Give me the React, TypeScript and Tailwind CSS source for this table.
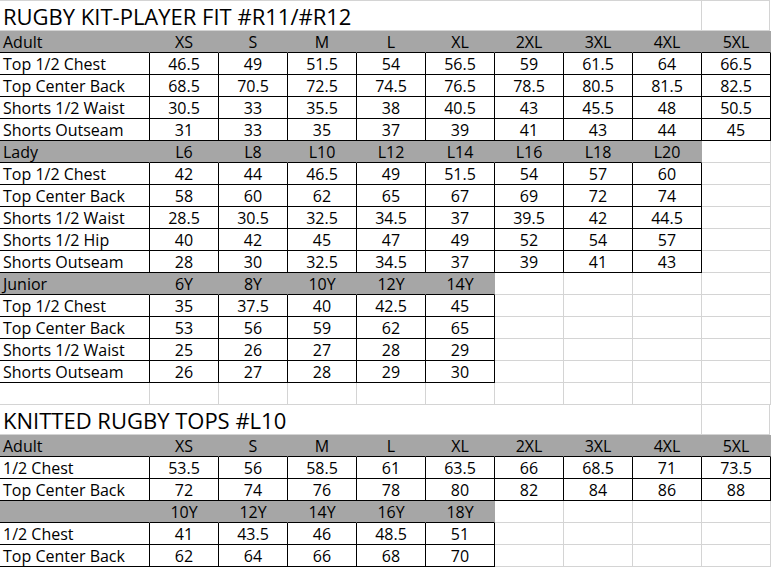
type Row =
  | { type: "title"; text: string }
  | { type: "table"; head: boolean; cells: string[] };

type Kind = "title" | "head" | "data" | "empty";

const COLS = 10;

const head = (...cells: string[]): Row => ({ type: "table", head: true, cells });
const data = (...cells: string[]): Row => ({ type: "table", head: false, cells });

const rows: Row[] = [
  { type: "title", text: "RUGBY KIT-PLAYER FIT #R11/#R12" },
  head("Adult", "XS", "S", "M", "L", "XL", "2XL", "3XL", "4XL", "5XL"),
  data("Top 1/2 Chest", "46.5", "49", "51.5", "54", "56.5", "59", "61.5", "64", "66.5"),
  data("Top Center Back", "68.5", "70.5", "72.5", "74.5", "76.5", "78.5", "80.5", "81.5", "82.5"),
  data("Shorts 1/2 Waist", "30.5", "33", "35.5", "38", "40.5", "43", "45.5", "48", "50.5"),
  data("Shorts Outseam", "31", "33", "35", "37", "39", "41", "43", "44", "45"),
  head("Lady", "L6", "L8", "L10", "L12", "L14", "L16", "L18", "L20"),
  data("Top 1/2 Chest", "42", "44", "46.5", "49", "51.5", "54", "57", "60"),
  data("Top Center Back", "58", "60", "62", "65", "67", "69", "72", "74"),
  data("Shorts 1/2 Waist", "28.5", "30.5", "32.5", "34.5", "37", "39.5", "42", "44.5"),
  data("Shorts 1/2 Hip", "40", "42", "45", "47", "49", "52", "54", "57"),
  data("Shorts Outseam", "28", "30", "32.5", "34.5", "37", "39", "41", "43"),
  head("Junior", "6Y", "8Y", "10Y", "12Y", "14Y"),
  data("Top 1/2 Chest", "35", "37.5", "40", "42.5", "45"),
  data("Top Center Back", "53", "56", "59", "62", "65"),
  data("Shorts 1/2 Waist", "25", "26", "27", "28", "29"),
  data("Shorts Outseam", "26", "27", "28", "29", "30"),
  data(),
  { type: "title", text: "KNITTED RUGBY TOPS #L10" },
  head("Adult", "XS", "S", "M", "L", "XL", "2XL", "3XL", "4XL", "5XL"),
  data("1/2 Chest", "53.5", "56", "58.5", "61", "63.5", "66", "68.5", "71", "73.5"),
  data("Top Center Back", "72", "74", "76", "78", "80", "82", "84", "86", "88"),
  head("", "10Y", "12Y", "14Y", "16Y", "18Y"),
  data("1/2 Chest", "41", "43.5", "46", "48.5", "51"),
  data("Top Center Back", "62", "64", "66", "68", "70"),
];

function kindAt(r: number, c: number): Kind {
  const row = rows[r];
  if (!row) return "empty";
  if (row.type === "title") return "title";
  if (c < row.cells.length) return row.head ? "head" : "data";
  return "empty";
}

function Cell({ r, c }: { r: number; c: number }) {
  const row = rows[r] as Extract<Row, { type: "table" }>;
  const kind = kindAt(r, c);
  const right = c + 1 < COLS ? kindAt(r, c + 1) : "empty";
  const below = kindAt(r + 1, c);

  const rightCls =
    kind === "data" || right === "data"
      ? "border-r-black"
      : kind === "head"
        ? "border-r-[#a6a6a6]"
        : "border-r-[#d4d4d4]";
  const bottomCls =
    kind === "data" || kind === "head" || below === "data"
      ? "border-b-black"
      : "border-b-[#d4d4d4]";

  return (
    <div
      className={`flex h-full shrink-0 items-center border-r border-b ${rightCls} ${bottomCls} ${
        kind === "head" ? "bg-[#a6a6a6]" : "bg-white"
      } ${c === 0 ? "w-[150px] justify-start pl-[3px]" : "w-[69px] justify-center"}`}
    >
      {kind !== "empty" && <span className="whitespace-nowrap">{row.cells[c]}</span>}
    </div>
  );
}

export default function App() {
  return (
    <div className="min-h-screen bg-white">
      <div
        className="w-[770px] border-t border-[#d4d4d4] text-[16px] leading-none text-black"
        style={{ fontFamily: '"Open Sans", "Noto Sans", sans-serif' }}
      >
        {rows.map((row, r) =>
          row.type === "title" ? (
            <div key={r} className="flex h-[30px]">
              <div className="flex h-full w-[702px] shrink-0 items-center border-r border-b border-[#d4d4d4] pl-[3px] text-[22px]">
                {row.text}
              </div>
              <div className="h-full w-[68px] shrink-0 border-r border-b border-[#d4d4d4]" />
            </div>
          ) : (
            <div key={r} className="flex h-[22px]">
              {Array.from({ length: COLS }, (_, c) => (
                <Cell key={c} r={r} c={c} />
              ))}
            </div>
          )
        )}
      </div>
    </div>
  );
}
